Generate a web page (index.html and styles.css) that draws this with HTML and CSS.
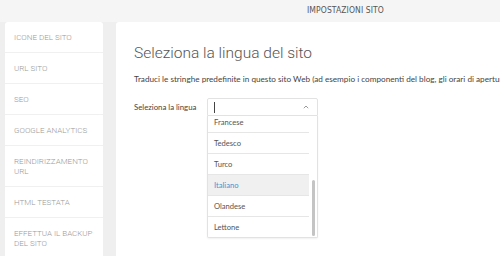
FILE: index.html
```html
<!DOCTYPE html>
<html lang="it">
<head>
<meta charset="UTF-8" />
<meta name="viewport" content="width=device-width, initial-scale=1" />
<title>Impostazioni sito</title>
<link rel="stylesheet" href="styles.css">
</head>
<body>
    <div class="topbar">IMPOSTAZIONI SITO</div>

    <div class="layout">
        <ul class="sidebar">
            <li class="nav-item">ICONE DEL SITO</li>
            <li class="nav-item">URL SITO</li>
            <li class="nav-item">SEO</li>
            <li class="nav-item">GOOGLE ANALYTICS</li>
            <li class="nav-item">REINDIRIZZAMENTO URL</li>
            <li class="nav-item">HTML TESTATA</li>
            <li class="nav-item">EFFETTUA IL BACKUP DEL SITO</li>
        </ul>

        <div class="panel">
            <h1 class="title">Seleziona la lingua del sito</h1>
            <p class="desc">Traduci le stringhe predefinite in questo sito Web (ad esempio i componenti del blog, gli orari di apertura e altro ancora).</p>

            <div class="field">
                <span class="label">Seleziona la lingua</span>
                <div class="select">
                    <div class="select-input">
                        <span class="caret"></span>
                        <svg class="chevron" width="6" height="4" viewBox="0 0 6 4"><path d="M0.8 3.2 L3 1 L5.2 3.2" fill="none" stroke="#9a9a9a" stroke-width="1"/></svg>
                    </div>
                    <div class="options">
                        <ul class="option-list">
                            <li class="option">Francese</li>
                            <li class="option">Tedesco</li>
                            <li class="option">Turco</li>
                            <li class="option active">Italiano</li>
                            <li class="option">Olandese</li>
                            <li class="option">Lettone</li>
                        </ul>
                        <div class="scroll-thumb"></div>
                    </div>
                </div>
            </div>
        </div>
    </div>
</body>
</html>
```

FILE: styles.css
```css
/* Reset */
* {
    margin: 0;
    padding: 0;
    box-sizing: border-box;
}

body {
    background-color: #efefef;
    font-family: 'Lato', 'Open Sans', sans-serif;
    color: #555;
    height: 256px;
    overflow: hidden;
}

/* Top bar */
.topbar {
    height: 22px;
    background-color: #f5f5f5;
    padding-left: 307px;
    font-family: 'DejaVu Sans Condensed', 'Roboto', sans-serif;
    font-size: 8.5px;
    line-height: 21px;
    color: #555;
    letter-spacing: 0.1px;
}

/* Two column layout */
.layout {
    display: flex;
    gap: 13px;
    padding-left: 5px;
    height: 234px;
}

/* Sidebar */
.sidebar {
    list-style: none;
    width: 98px;
    flex-shrink: 0;
    background-color: #fff;
    border-radius: 3px 3px 0 0;
}

.nav-item {
    padding: 11px 9px 9px 9px;
    font-family: 'Roboto', sans-serif;
    font-weight: 300;
    font-size: 8px;
    line-height: 10px;
    color: #9a9a9a;
    border-bottom: 1px solid #f0f0f0;
}

/* Main panel */
.panel {
    flex: 1;
    background-color: #fff;
    border-radius: 3px 0 0 0;
    padding: 21px 0 0 18px;
    white-space: nowrap;
    overflow: hidden;
}

.title {
    font-family: 'Roboto', sans-serif;
    font-weight: 300;
    font-size: 15.5px;
    line-height: 20px;
    color: #555;
}

.desc {
    margin-top: 11px;
    font-size: 8.2px;
    line-height: 10px;
    color: #444;
}

/* Language field */
.field {
    display: flex;
    align-items: flex-start;
    margin-top: 14px;
}

.label {
    width: 73px;
    flex-shrink: 0;
    font-size: 7.8px;
    line-height: 18px;
    color: #444;
}

.select {
    width: 111px;
    position: relative;
}

.select-input {
    height: 18px;
    border: 1px solid #e2e2e2;
    border-radius: 2px 2px 0 0;
    display: flex;
    align-items: center;
    justify-content: space-between;
    padding: 0 8px 0 6px;
    background-color: #fff;
}

.caret {
    width: 1px;
    height: 11px;
    background-color: #444;
}

.options {
    position: relative;
    height: 122px;
    overflow: hidden;
    border: 1px solid #e2e2e2;
    border-top: none;
    border-radius: 0 0 2px 2px;
    background-color: #fff;
    box-shadow: 0 1px 2px rgba(0, 0, 0, 0.06);
}

.option-list {
    list-style: none;
    margin-top: -4px;
    margin-right: 8px;
}

.option {
    height: 21px;
    line-height: 20px;
    padding-left: 6px;
    font-size: 7.6px;
    color: #555;
    border-bottom: 1px solid #e6e6e6;
}

.option:last-child {
    border-bottom: none;
}

.option.active {
    background-color: #f0f0f0;
    color: #3a97d4;
}

.scroll-thumb {
    position: absolute;
    right: 2px;
    top: 64px;
    width: 3px;
    height: 56px;
    border-radius: 2px;
    background-color: #c4c4c4;
}
```
